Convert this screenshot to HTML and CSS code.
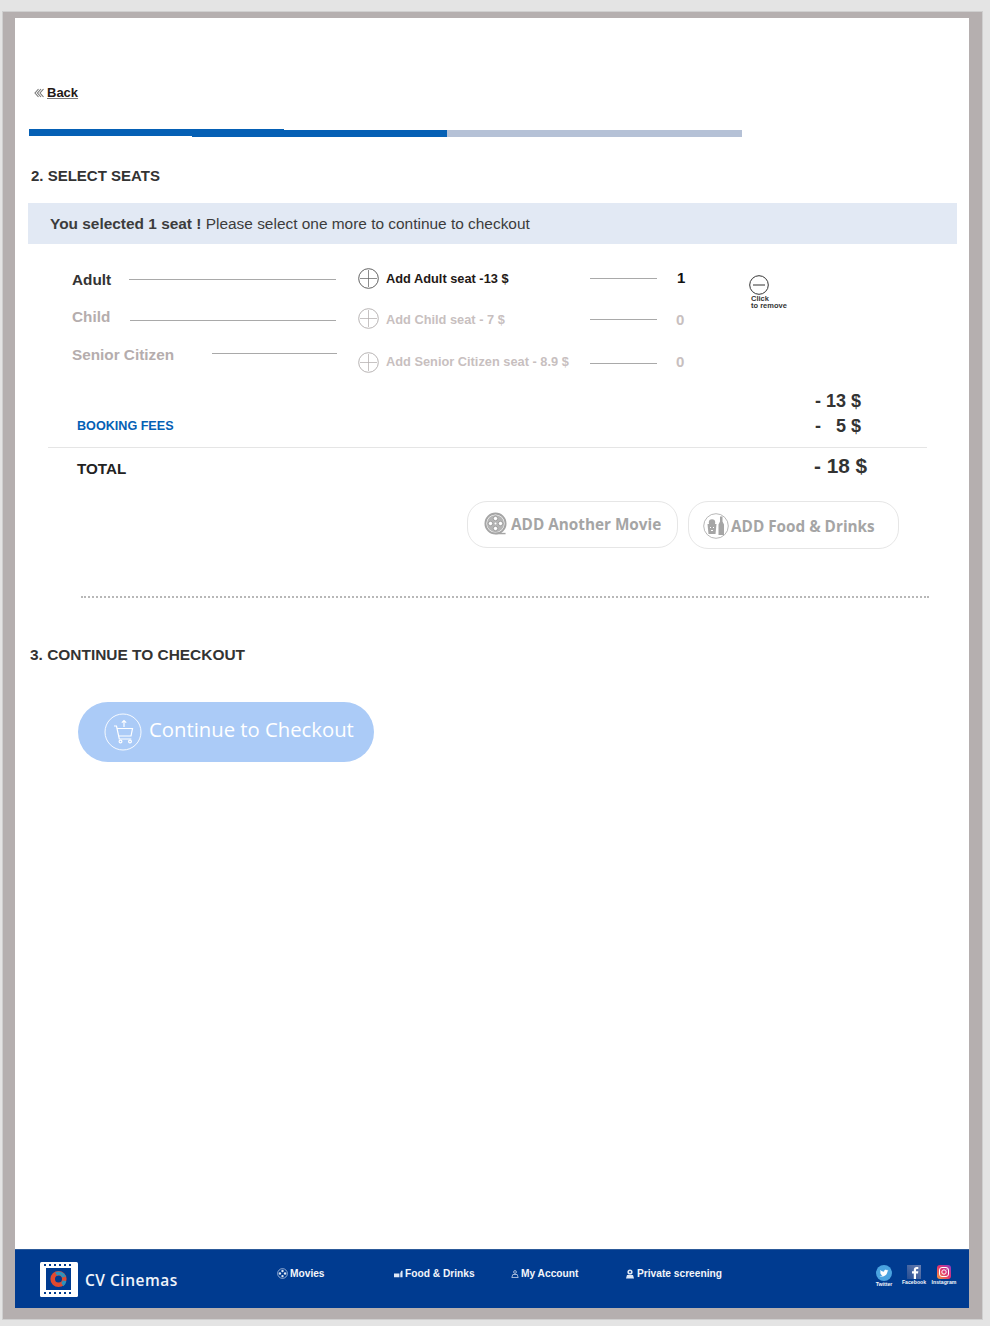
FILE: index.html
```html
<!DOCTYPE html>
<html lang="en">
<head>
<meta charset="utf-8">
<title>CV Cinemas - Select seats</title>
<link rel="stylesheet" href="styles.css">
</head>
<body>
<div class="frame">
<div class="page">
<main class="main">
  <a class="back" href="#">
    <svg class="back-icon" viewBox="0 0 10 10" width="10" height="10"><path d="M4.500 1 1 5l3.500 4M7 1 3.500 5 7 9M9.500 1 6 5l3.500 4" fill="none" stroke="#777" stroke-width="1.100"/></svg>
    <span class="back-text">Back</span>
  </a>
  <div class="progress"><span class="seg seg-a"></span><span class="seg seg-b"></span><span class="seg seg-c"></span><span class="seg seg-rest"></span></div>
  <h2 class="heading h-seats">2. SELECT SEATS</h2>
  <p class="banner"><strong>You selected 1 seat !</strong> Please select one more to continue to checkout</p>

  <div class="seats">
    <div class="seat-left">
      <div class="left-row lr-adult"><span class="seat-name">Adult</span><span class="rule"></span></div>
      <div class="left-row lr-child muted"><span class="seat-name">Child</span><span class="rule"></span></div>
      <div class="left-row lr-senior muted"><span class="seat-name">Senior Citizen</span><span class="rule"></span></div>
    </div>
    <div class="seat-right">
      <div class="right-row rr-adult">
        <svg class="circ" viewBox="0 0 22 22" width="21" height="21"><circle cx="11" cy="11" r="10.300" fill="none" stroke="#5a5a5a"/><path d="M11 2v18M2 11h18" stroke="#6a6a6a" stroke-width=".8"/></svg>
        <span class="add-text">Add Adult seat -13 $</span><span class="short-rule"></span><span class="count">1</span>
      </div>
      <div class="right-row rr-child muted">
        <svg class="circ" viewBox="0 0 22 22" width="21" height="21"><circle cx="11" cy="11" r="10.300" fill="none" stroke="#b5b0b0"/><path d="M11 2v18M2 11h18" stroke="#b5b0b0" stroke-width=".8"/></svg>
        <span class="add-text">Add Child seat - 7 $</span><span class="short-rule"></span><span class="count">0</span>
      </div>
      <div class="right-row rr-senior muted">
        <svg class="circ" viewBox="0 0 22 22" width="21" height="21"><circle cx="11" cy="11" r="10.300" fill="none" stroke="#b5b0b0"/><path d="M11 2v18M2 11h18" stroke="#b5b0b0" stroke-width=".8"/></svg>
        <span class="add-text">Add Senior Citizen seat - 8.9 $</span><span class="short-rule"></span><span class="count">0</span>
      </div>
    </div>
    <div class="remove">
      <svg viewBox="0 0 20 20" width="20" height="20"><circle cx="10" cy="10" r="9.300" fill="none" stroke="#333"/><path d="M4 10h12" stroke="#333" stroke-width="1"/></svg>
      <div class="remove-text">Click<br>to remove</div>
    </div>
  </div>

  <div class="sum-top"><span class="price">- 13 $</span></div>
  <div class="sum-row"><span class="fees">BOOKING FEES</span><span class="price price-fee">-&nbsp;&nbsp;&nbsp;5 $</span></div>
  <div class="total-row"><span class="total">TOTAL</span><span class="total-price">- 18 $</span></div>

  <div class="actions">
    <a class="pill pill-movie" href="#">
      <svg viewBox="0 0 24 24" width="23" height="23"><circle cx="12" cy="12" r="10.500" fill="none" stroke="#a5a5a5" stroke-width="2"/><path d="M12 22.500h10.500" stroke="#a5a5a5" stroke-width="1.500"/><circle cx="12" cy="12" r="9" fill="#b5b5b5"/><g fill="#fff" stroke="#8f8f8f" stroke-width=".8"><circle cx="12" cy="6.800" r="2.300"/><circle cx="12" cy="17.200" r="2.300"/><circle cx="6.800" cy="12" r="2.300"/><circle cx="17.200" cy="12" r="2.300"/></g><circle cx="12" cy="12" r="1" fill="#fff"/></svg>
      <span>ADD Another Movie</span>
    </a>
    <a class="pill pill-food" href="#">
      <svg viewBox="0 0 26 26" width="26" height="26"><circle cx="13" cy="13" r="12.300" fill="#fff" stroke="#a5a5a5" stroke-width=".8"/><path d="M4.500 11h9l-1 10h-7z" fill="#a5a5a5"/><circle cx="9" cy="9.500" r="3.200" fill="#a5a5a5"/><path d="M15.500 22V11.500l1.500-3V3.500h2.500v5l1.500 3V22z" fill="#a5a5a5"/><path d="M7 14h1v1H7zm3 0h1v1h-1zm-2 3h2v1H8z" fill="#fff"/></svg>
      <span>ADD Food &amp; Drinks</span>
    </a>
  </div>

  <div class="dots"></div>
  <h2 class="heading h-checkout">3. CONTINUE TO CHECKOUT</h2>

  <a class="checkout" href="#">
    <svg viewBox="0 0 38 38" width="38" height="38"><circle cx="19" cy="19" r="18" fill="none" stroke="#fff" stroke-width=".9"/><g fill="none" stroke="#fff" stroke-width="1.200"><path d="M20 14V7.500M17.800 9.700l2.200-2.200 2.200 2.200"/><path d="M10 13h2.500l2.800 13h12"/><path d="M13 15.500h15.500l-1.500 7.500H14.600"/><circle cx="16.500" cy="28.500" r="1.400"/><circle cx="26" cy="28.500" r="1.400"/></g></svg>
    <span>Continue to Checkout</span>
  </a>
</main>

<footer class="footer">
  <div class="brand">
    <svg viewBox="0 0 38 35" width="38" height="35">
      <rect x="0" y="0" width="38" height="35" rx="1.500" fill="#fff"/>
      <rect x="6" y="6" width="25" height="22" fill="#003b90"/>
      <g fill="#003b90"><path d="M4 2h2v2H4zm5 0h2v2H9zm5 0h2v2h-2zm5 0h2v2h-2zm5 0h2v2h-2zm5 0h2v2h-2zM4 30h2v2H4zm5 0h2v2H9zm5 0h2v2h-2zm5 0h2v2h-2zm5 0h2v2h-2zm5 0h2v2h-2z"/></g>
      <circle cx="18.500" cy="17" r="5.800" fill="none" stroke="#e2492f" stroke-width="4.600"/>
      <path d="M15 10.500a7.900 7.900 0 0 1 11 4l-3.800 1a3.900 3.900 0 0 0-5-2zM26.300 19a7.900 7.900 0 0 1-3 5.300l-2-3.300a3.900 3.900 0 0 0 1.200-2.500z" fill="#2c93bd"/>
    </svg>
    <span class="brand-name">CV Cinemas</span>
  </div>
  <a class="nav-item" href="#">
    <svg viewBox="0 0 12 12" width="11" height="11"><circle cx="6" cy="6" r="5.300" fill="none" stroke="#dfe8f5" stroke-width=".7"/><g fill="#dfe8f5"><circle cx="6" cy="3.200" r="1.300"/><circle cx="6" cy="8.800" r="1.300"/><circle cx="3.200" cy="6" r="1.300"/><circle cx="8.800" cy="6" r="1.300"/></g></svg>
    <span>Movies</span>
  </a>
  <a class="nav-item" href="#">
    <svg viewBox="0 0 10 8" width="9" height="8"><path d="M0 3.500h6v4H0zM7 7.500V3l1-2.500h1.500v7z" fill="#dfe8f5"/></svg>
    <span>Food &amp; Drinks</span>
  </a>
  <a class="nav-item" href="#">
    <svg viewBox="0 0 8 8" width="8" height="8"><circle cx="4" cy="2" r="1.400" fill="none" stroke="#dfe8f5" stroke-width=".7"/><path d="M.8 7.500 1.800 4.500h4.400l1 3z" fill="none" stroke="#dfe8f5" stroke-width=".7"/></svg>
    <span>My Account</span>
  </a>
  <a class="nav-item" href="#">
    <svg viewBox="0 0 10 10" width="10" height="10"><circle cx="5" cy="3" r="2.600" fill="#dfe8f5"/><path d="M1 9.500 2 6h6l1 3.500z" fill="#dfe8f5"/><circle cx="5" cy="3" r="1" fill="#003b90"/></svg>
    <span>Private screening</span>
  </a>
  <div class="social">
    <a class="soc" href="#">
      <svg viewBox="0 0 16 16" width="16" height="16"><circle cx="8" cy="8" r="8" fill="#4aa3e0"/><path d="M3.500 11c3 1.300 7.300.3 8-4.500l1-1-1.200.2.700-1-1.200.5c-1-1-3-.3-2.700 1.500-1.500 0-2.800-.7-3.700-1.800-.4 1-.1 2 .6 2.500l-.9-.2c0 1 .6 1.700 1.500 2H4.900c.2.700.9 1.100 1.600 1.200-.9.500-2 .7-3 .6z" fill="#fff"/></svg>
      <span>Twitter</span>
    </a>
    <a class="soc soc-up" href="#">
      <svg viewBox="0 0 14 14" width="14" height="14"><defs><linearGradient id="fb" x1="0" y1="1" x2="1" y2="0"><stop offset="0" stop-color="#254d93"/><stop offset="1" stop-color="#6a7fb0"/></linearGradient></defs><rect width="14" height="14" fill="url(#fb)"/><path d="M9 14V8.500h2l.3-2.200H9V5c0-.7.3-1.100 1.100-1.100h1.200V2c-.5 0-1-.1-1.700-.1C8 1.900 6.800 3 6.800 4.900v1.400H5v2.200h1.800V14z" fill="#fff"/></svg>
      <span>Facebook</span>
    </a>
    <a class="soc soc-up" href="#">
      <svg viewBox="0 0 14 14" width="14" height="14"><defs><linearGradient id="ig" x1="0" y1="1" x2="1" y2="0"><stop offset="0" stop-color="#f7a13a"/><stop offset=".5" stop-color="#e2336f"/><stop offset="1" stop-color="#8d3cc4"/></linearGradient></defs><rect width="14" height="14" rx="3" fill="url(#ig)"/><rect x="2.500" y="2.500" width="9" height="9" rx="2.500" fill="none" stroke="#fff"/><circle cx="7" cy="7" r="2.200" fill="none" stroke="#fff"/><circle cx="10" cy="4" r=".6" fill="#fff"/></svg>
      <span>Instagram</span>
    </a>
  </div>
</footer>
</div>
</div>
</body>
</html>
```
FILE: styles.css
```css
* { box-sizing: border-box; }
html, body { margin: 0; padding: 0; }
body {
  width: 990px;
  height: 1326px;
  background: #e4e4e4;
  font-family: "Liberation Sans", Arial, sans-serif;
  color: #333;
  overflow: hidden;
}
a { color: inherit; text-decoration: none; }

.frame {
  width: 981px;
  height: 1309px;
  margin: 11px 0 0 2px;
  padding: 6px 13px 11px 12px;
  background: #b5afaf;
  border: 1px solid #cfcfcf;
}
.page {
  height: 1290px;
  background: #fff;
  display: flex;
  flex-direction: column;
}
.main { flex: 1; display: flex; flex-direction: column; padding: 67px 12px 0 13px; align-items: flex-start; }

.back { display: flex; align-items: center; gap: 3px; margin-left: 6px; height: 15px; font-size: 13px; font-weight: 700; color: #231815; }
.back-text { text-decoration: underline; text-decoration-color: #777; }
.progress { display: flex; align-items: flex-start; width: 713px; height: 8px; margin: 29px 0 0 1px; }
.seg { display: block; height: 7px; background: #0560b5; }
.seg-a { width: 163px; }
.seg-b { width: 92px; height: 8px; }
.seg-c { width: 163px; margin-top: 1px; }
.seg-rest { width: 295px; margin-top: 1px; background: #b5c1d6; }

.heading { margin: 0; line-height: 18px; font-weight: 700; color: #333; }
.h-seats { margin: 30px 0 0 3px; font-size: 15px; }
.banner {
  width: 929px;
  height: 41px;
  margin: 18px 0 0;
  padding: 0 0 0 22px;
  background: #e2e9f4;
  font-size: 15.430px;
  line-height: 41px;
  color: #3c3c3c;
}

.seats { display: flex; width: 100%; height: 120px; margin-top: 21px; }
.seat-left { width: 266px; margin-left: 44px; display: flex; flex-direction: column; }
.left-row { display: flex; height: 20px; font-size: 15.300px; font-weight: 700; line-height: 20px; color: #333; }
.left-row.muted { color: #b5adad; }
.seat-name { flex: none; }
.rule { display: block; height: 1px; background: #a9a9a9; }
.lr-adult { margin-top: 5px; }
.lr-adult .rule { width: 207px; margin: 9px 0 0 18px; }
.lr-child { margin-top: 17px; }
.lr-child .rule { width: 206px; margin: 13px 0 0 20px; }
.lr-senior { margin-top: 18px; }
.lr-senior .rule { width: 125px; margin: 8px 0 0 38px; }

.seat-right { width: 384px; margin-left: 20px; display: flex; flex-direction: column; }
.right-row { display: flex; align-items: center; height: 22px; font-size: 12.800px; font-weight: 700; color: #231815; }
.right-row.muted { color: #c8bfbf; }
.rr-adult { margin-top: 2px; }
.rr-child { margin-top: 19px; }
.rr-child .circ { margin-bottom: 2px; }
.rr-senior { margin-top: 20px; }
.rr-senior .circ { margin-top: 2px; }
.circ { flex: none; }
.add-text { width: 204px; margin-left: 7px; flex: none; white-space: nowrap; }
.short-rule { width: 67px; height: 1px; background: #a9a9a9; flex: none; }
.rr-senior .short-rule { margin-top: 5px; }
.count { margin-left: 19px; font-size: 15px; }
.rr-adult .count { color: #111; margin-bottom: 2px; margin-left: 20px; }
.remove { margin: 10px 0 0 7px; }
.remove svg { display: block; }
.remove-text { font-size: 7.500px; line-height: 6.500px; font-weight: 700; color: #333; margin-left: 2px; margin-top: 1px; white-space: nowrap; }

.sum-top { width: 100%; height: 26px; margin-top: 3px; padding-left: 787px; }
.price { font-size: 18px; font-weight: 700; line-height: 26px; color: #333; white-space: nowrap; }
.sum-row { display: flex; justify-content: space-between; width: 100%; height: 24px; padding: 0 0 0 49px; }
.fees { font-size: 12.600px; font-weight: 700; line-height: 24px; color: #0560b5; }
.price-fee { width: 142px; line-height: 24px; }
.total-row {
  display: flex; justify-content: space-between; width: 879px;
  margin: 9px 0 0 20px; padding: 8px 0 0 29px; height: 42px;
  border-top: 1px solid #e5e5e5;
}
.total { font-size: 15.200px; font-weight: 700; line-height: 26px; color: #222; }
.total-price { width: 113px; font-size: 20.800px; font-weight: 700; line-height: 19px; color: #333; }

.actions { display: flex; gap: 10px; margin: 12px 0 0 439px; }
.pill {
  display: flex; align-items: center; width: 211px; height: 47px;
  border: 1px solid #e6e6e6; border-radius: 20px;
  font-family: "Open Sans", sans-serif; font-size: 15.300px; font-weight: 700; color: #a5a5a5;
  white-space: nowrap;
}
.pill-movie { padding: 0 0 2px 16px; gap: 4px; }
.pill-food { height: 48px; padding: 2px 0 0 14px; gap: 2px; }

.dots { width: 848px; margin: 47px 0 0 53px; border-top: 2px dotted #b8b8b8; }
.h-checkout { margin: 48px 0 0 2px; font-size: 15.450px; }
.checkout {
  display: flex; align-items: center; gap: 7px; width: 296px; height: 60px;
  margin: 38px 0 0 50px; padding: 0 0 0 26px;
  background: #abcbf7; border-radius: 30px;
  font-family: "Open Sans", sans-serif; font-size: 20.300px; color: #fff; white-space: nowrap;
}
.checkout span { margin-bottom: 6px; }

.footer {
  height: 59px; flex: none; background: #003b90;
  border-top: 1px solid #2c5a9a;
  display: grid; grid-template-columns: 262px 117px 117px 114px 1fr auto;
  color: #f2f5fa;
}
.brand { display: flex; align-items: center; gap: 7px; padding: 0 0 0 25px; }
.brand svg { flex: none; }
.brand-name { font-family: "Open Sans", sans-serif; font-size: 15.500px; font-weight: 600; color: #f0f4fa; margin-top: 2px; letter-spacing: .5px; }
.nav-item { display: flex; align-items: center; align-self: start; gap: 2px; margin-top: 17px; height: 13px; font-size: 10.200px; font-weight: 700; white-space: nowrap; }
.social { display: flex; padding: 15px 10px 0 0; }
.soc { display: flex; flex-direction: column; align-items: center; width: 30px; font-size: 5.200px; font-weight: 700; line-height: 6px; }
.soc svg { display: block; }
.soc-up { padding-top: 0; }
.soc span { white-space: nowrap; }
```
